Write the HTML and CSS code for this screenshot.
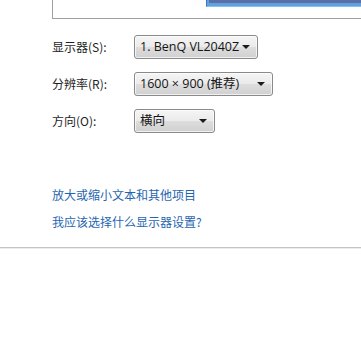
FILE: index.html
```html
<!DOCTYPE html>
<html lang="zh">
<head>
<meta charset="utf-8">
<link rel="stylesheet" href="styles.css">
</head>
<body>
<div class="preview">
  <div class="monitor"><div class="monitor-inner"></div></div>
</div>
<div class="settings">
  <div class="row">
    <span class="label">显示器(S):</span>
    <div class="combo combo-display"><span>1. BenQ VL2040Z</span><i class="arrow"></i></div>
  </div>
  <div class="row">
    <span class="label">分辨率(R):</span>
    <div class="combo combo-res"><span>1600 × 900 (推荐)</span><i class="arrow"></i></div>
  </div>
  <div class="row">
    <span class="label">方向(O):</span>
    <div class="combo combo-orient"><span>横向</span><i class="arrow"></i></div>
  </div>
</div>
<div class="links">
  <a class="link">放大或缩小文本和其他项目</a>
  <a class="link">我应该选择什么显示器设置?</a>
</div>
<div class="divider"></div>
</body>
</html>
```
FILE: styles.css
```css
html, body {
  margin: 0;
  padding: 0;
  background: #ffffff;
  font-family: "Noto Sans CJK SC", "Liberation Sans", sans-serif;
  font-size: 12px;
  color: #1e1e1e;
}
body {
  width: 361px;
  height: 339px;
  overflow: hidden;
}
.preview {
  margin-left: 52px;
  height: 18px;
  border-left: 1px solid #a0a0a0;
  border-bottom: 1px solid #a0a0a0;
  display: flex;
  justify-content: flex-end;
  align-items: flex-start;
}
.monitor {
  width: 154px;
  height: 3px;
  padding-bottom: 3px;
  background: #5ea2e0;
  border-left: 1px solid #3c78c0;
  border-bottom: 1px solid #8cc0ee;
}
.monitor-inner {
  height: 3px;
  margin-left: 2px;
  background: #5b6fa6;
}
.settings {
  margin-left: 52px;
  margin-top: 16px;
  display: flex;
  flex-direction: column;
  gap: 13px;
}
.row {
  display: grid;
  grid-template-columns: 82px auto;
  align-items: center;
}
.label {
  font-size: 12px;
  line-height: 16px;
}
.combo {
  box-sizing: border-box;
  height: 24px;
  border: 1px solid #8a8a8a;
  border-radius: 3px;
  background: linear-gradient(to bottom, #f5f5f5 0%, #ebebeb 48%, #dddddd 52%, #d0d0d0 100%);
  box-shadow: inset 0 0 0 1px rgba(255,255,255,0.7);
  display: flex;
  align-items: center;
  justify-content: space-between;
  padding: 0 7px 0 5px;
  font-family: "Open Sans", "Noto Sans CJK SC", sans-serif;
  font-size: 12.5px;
  color: #141414;
  justify-self: start;
}
.combo-display { width: 124px; }
.combo-res { width: 139px; }
.combo-orient { width: 81px; }
.combo span {
  line-height: 16px;
  white-space: nowrap;
}
.arrow {
  flex: none;
  width: 0;
  height: 0;
  border-left: 4px solid transparent;
  border-right: 4px solid transparent;
  border-top: 4px solid #1a1a1a;
}
.links {
  margin-left: 52px;
  margin-top: 54px;
  display: flex;
  flex-direction: column;
  gap: 11px;
}
.link {
  color: #1f66b0;
  font-size: 12px;
  line-height: 16px;
}
.divider {
  margin-top: 17px;
  height: 1px;
  background: #c4c4c4;
  border-bottom: 1px solid #ececec;
}
```
